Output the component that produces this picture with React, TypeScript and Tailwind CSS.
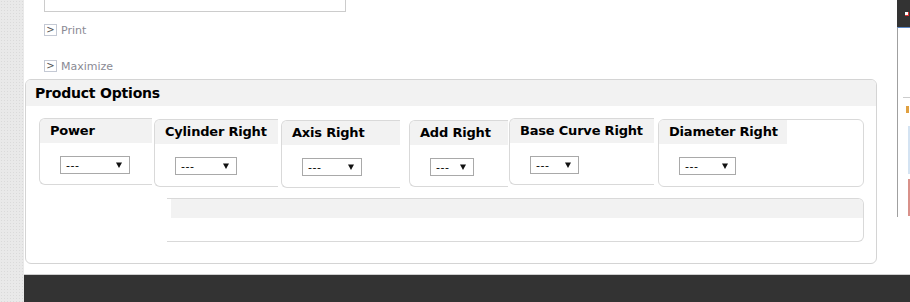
import React from "react";

type Box = { label: string; outer: string; sel: string };

const boxes: Box[] = [
  { label: "Power", outer: "mt-0 h-[67px] w-[113px] mr-[2px]", sel: "w-[70px]" },
  { label: "Cylinder Right", outer: "mt-[1px] h-[68px] w-[124px] mr-[3px]", sel: "w-[62px]" },
  { label: "Axis Right", outer: "mt-[2px] h-[68px] w-[119px] mr-[9px]", sel: "w-[60px]" },
  { label: "Add Right", outer: "mt-[2px] h-[67px] w-[99px] mr-[1px]", sel: "w-[44px]" },
  { label: "Base Curve Right", outer: "mt-0 h-[67px] w-[145px] mr-[4px]", sel: "w-[49px]" },
];

function FakeSelect({ w }: { w: string }) {
  return (
    <div
      className={`${w} h-[18px] border border-[#a9a9a9] bg-white flex items-center justify-between pl-[5px] pr-[7px] text-[11px] text-black leading-none`}
    >
      <span className="tracking-[0.5px]">---</span>
      <svg width="6" height="6" viewBox="0 0 6 6">
        <polygon points="0,0.5 6,0.5 3,6" fill="#111" />
      </svg>
    </div>
  );
}

function LinkRow({ label, cls }: { label: string; cls: string }) {
  return (
    <div className={`${cls} ml-[20px] h-[12px] flex items-center gap-[4px]`}>
      <div className="w-[13px] h-[12px] border border-[#c4c9d4] flex items-center justify-center text-[10px] leading-none text-[#555]">
        &gt;
      </div>
      <span className="text-[11px] leading-none text-[#8a8a94]">{label}</span>
    </div>
  );
}

export default function App() {
  return (
    <div className="flex w-[910px] h-[302px] overflow-hidden bg-white font-['DejaVu_Sans',Verdana,sans-serif]">
      <div className="w-[24px] h-full shrink-0 bg-[#e9e9e9] bg-[radial-gradient(#dadada_0.6px,transparent_0.8px)] bg-[length:3px_3px]" />
      <div className="flex flex-col w-[886px] h-full">
        <div className="flex h-[274px]">
          {/* main content */}
          <div className="w-[873px] h-full flex flex-col">
            <div className="ml-[20px] w-[302px] h-[12px] border-x border-b border-[#cccccc]" />
            <LinkRow label="Print" cls="mt-[12px]" />
            <LinkRow label="Maximize" cls="mt-[24px]" />

            <div className="mt-[7px] ml-[1px] w-[852px] border border-[#d4d4d4] rounded-[6px] overflow-hidden bg-white pb-[21px]">
              <div className="h-[26px] bg-[#f2f2f2] pl-[9px] flex items-center text-[14px] font-bold text-black tracking-[-0.2px]">
                Product Options
              </div>

              <div className="flex items-start ml-[13px] mt-[12px] h-[70px]">
                {boxes.map((b) => (
                  <div
                    key={b.label}
                    className={`${b.outer} flex flex-col border-l border-t border-b border-[#d9d9d9] rounded-l-[6px] overflow-hidden bg-white shrink-0`}
                  >
                    <div className="h-[24px] bg-[#f2f2f2] pl-[10px] flex items-center text-[13px] font-bold text-black whitespace-nowrap tracking-[-0.2px]">
                      {b.label}
                    </div>
                    <div className="pl-[20px] pt-[13px]">
                      <FakeSelect w={b.sel} />
                    </div>
                  </div>
                ))}
                <div className="mt-[1px] h-[68px] w-[206px] flex flex-col border border-[#d9d9d9] rounded-[6px] overflow-hidden bg-white shrink-0">
                  <div className="w-[128px] h-[24px] bg-[#f2f2f2] pl-[10px] flex items-center text-[13px] font-bold text-black whitespace-nowrap tracking-[-0.2px]">
                    Diameter Right
                  </div>
                  <div className="pl-[20px] pt-[13px]">
                    <FakeSelect w="w-[57px]" />
                  </div>
                </div>
              </div>

              <div className="ml-[141px] mt-[10px] w-[697px] border-t border-r border-b border-[#d9d9d9] rounded-r-[6px] overflow-hidden">
                <div className="ml-[4px] h-[19px] bg-[#f2f2f2]" />
                <div className="h-[23px]" />
              </div>
            </div>
          </div>

          {/* right edge strip */}
          <div className="w-[13px] h-full flex flex-col">
            <div className="h-[27px] bg-[#333333] flex items-center pl-[8px]">
              <div className="w-[4px] h-[4px] bg-white border-r border-b border-[#d33]" />
            </div>
            <div className="h-[190px] border-l border-t border-l-[#a0a0a0] border-t-[#5b87c5] flex flex-col">
              <div className="h-[69px]" />
              <div className="ml-[5px] h-px bg-[#cccccc]" />
              <div className="mt-[8px] ml-[8px] w-[3px] h-[7px] bg-[#e0a040]" />
              <div className="mt-[13px] ml-[10px] w-[3px] h-[48px] bg-[#d4e3f2]" />
              <div className="mt-[5px] ml-[10px] w-[3px] h-[37px] bg-[#d9918a]" />
            </div>
          </div>
        </div>
        <div className="h-[28px] bg-[#333333] border-t border-[#cfcfcf]" />
      </div>
    </div>
  );
}
